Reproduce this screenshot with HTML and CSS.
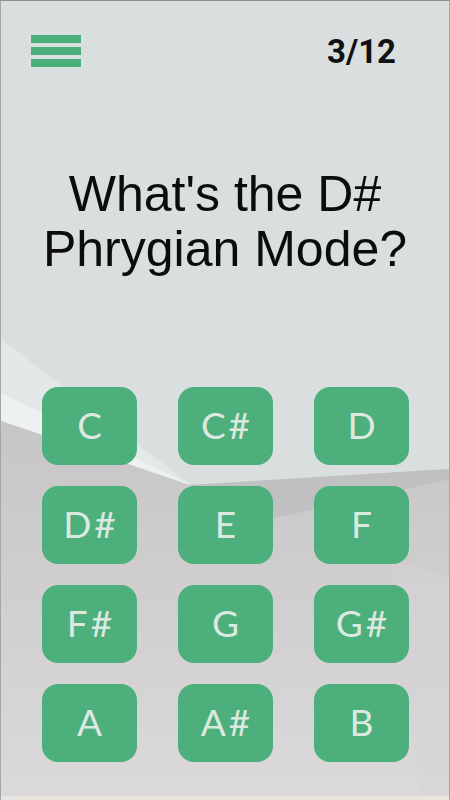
FILE: index.html
```html
<!DOCTYPE html>
<html>
<head>
<meta charset="utf-8">
<link rel="stylesheet" href="styles.css">
</head>
<body>
<div class="screen">
  <svg class="bg" viewBox="0 0 450 800" width="450" height="800" preserveAspectRatio="none">
    <defs>
      <linearGradient id="lower" x1="0" y1="0" x2="0" y2="1">
        <stop offset="0" stop-color="#c7c5c6"/>
        <stop offset="1" stop-color="#dbd9da"/>
      </linearGradient>
    </defs>
    <rect x="0" y="0" width="450" height="800" fill="#d9dfdf"/>
    <polygon points="0,338 190,484 0,420" fill="#e3e8e8"/>
    <polygon points="0,392 190,484 0,420" fill="#eef1f1"/>
    <polygon points="0,420 188,484 450,468 450,800 0,800" fill="url(#lower)"/>
    <polygon points="188,484 450,468 450,478 260,520" fill="#bdbec0" opacity="0.8"/>
    <polygon points="390,560 450,575 450,800 420,800" fill="#d6d4d5" opacity="0.5"/>
    <rect x="0" y="795" width="450" height="5" fill="#e8e5e0"/>
  </svg>
  <div class="content">
    <header class="topbar">
      <div class="menu">
        <span class="bar"></span>
        <span class="bar"></span>
        <span class="bar"></span>
      </div>
      <div class="progress">3/12</div>
    </header>
    <h1 class="question">What's the D#<br>Phrygian Mode?</h1>
    <div class="notes">
      <div class="note">C</div>
      <div class="note">C#</div>
      <div class="note">D</div>
      <div class="note">D#</div>
      <div class="note">E</div>
      <div class="note">F</div>
      <div class="note">F#</div>
      <div class="note">G</div>
      <div class="note">G#</div>
      <div class="note">A</div>
      <div class="note">A#</div>
      <div class="note">B</div>
    </div>
  </div>
</div>
</body>
</html>
```
FILE: styles.css
```css
html, body {
  margin: 0;
  padding: 0;
}
body {
  width: 450px;
  height: 800px;
  overflow: hidden;
  background: #d9dfdf;
}
.screen {
  position: relative;
  width: 450px;
  height: 800px;
  box-sizing: border-box;
  border-top: 1px solid #8e9090;
  border-left: 1px solid #a3a7a7;
  border-right: 1px solid #a3a7a7;
  overflow: hidden;
}
.bg {
  position: absolute;
  left: 0;
  top: 0;
  z-index: 0;
}
.content {
  position: relative;
  z-index: 1;
  display: flex;
  flex-direction: column;
}
.topbar {
  display: flex;
  justify-content: space-between;
  align-items: center;
  padding: 33px 53px 0 30px;
}
.menu {
  display: flex;
  flex-direction: column;
  gap: 3.5px;
  width: 50px;
}
.bar {
  display: block;
  height: 8.5px;
  background: #4caf7b;
}
.progress {
  font-family: Roboto, "Liberation Sans", sans-serif;
  font-weight: 700;
  font-size: 33px;
  line-height: 33px;
  color: #111;
  margin-top: 1px;
}
.question {
  margin: 99px 0 0 0;
  font-family: "Liberation Sans", Arial, sans-serif;
  font-weight: 400;
  font-size: 50px;
  line-height: 55px;
  text-align: center;
  color: #0c0c0c;
}
.notes {
  margin-top: 110px;
  display: grid;
  grid-template-columns: repeat(3, 95px);
  grid-auto-rows: 78px;
  column-gap: 41px;
  row-gap: 21px;
  justify-content: center;
  padding-left: 1px;
}
.note {
  display: flex;
  align-items: center;
  justify-content: center;
  background: #4daf7c;
  border-radius: 16px;
  color: #dce9e1;
  font-family: Lato, "Open Sans", sans-serif;
  font-size: 37px;
  font-weight: 400;
  letter-spacing: 3px;
  padding-left: 3px;
  padding-bottom: 4px;
  box-sizing: border-box;
}
```
